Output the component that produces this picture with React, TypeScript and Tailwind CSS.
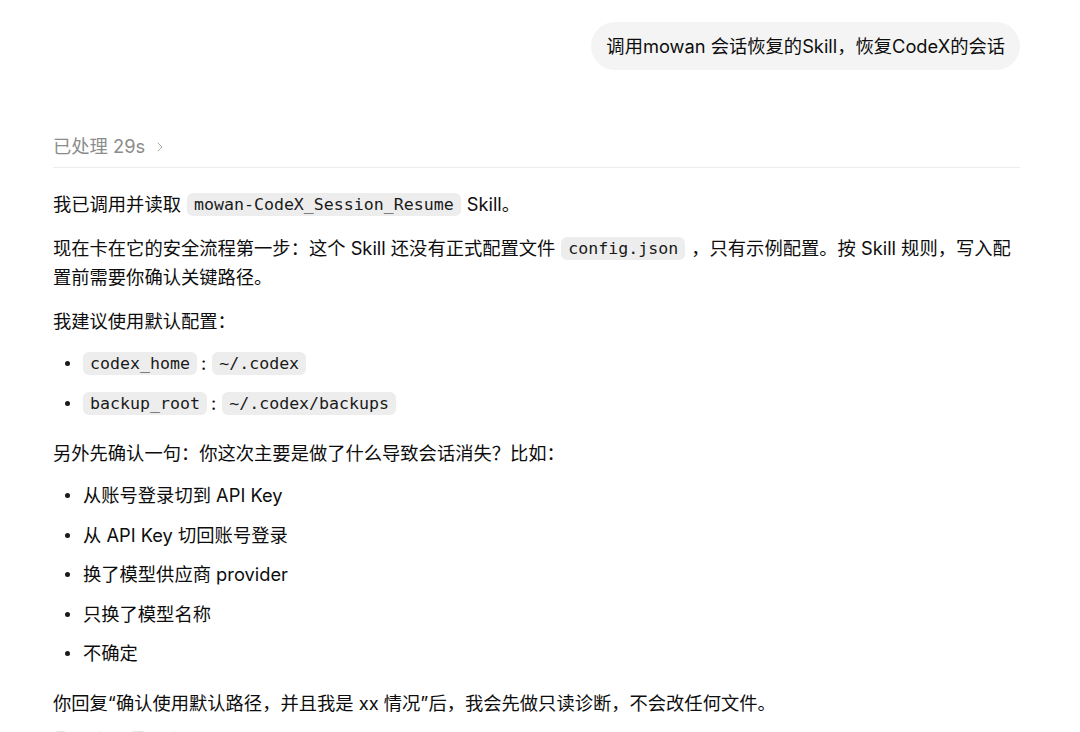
import React from "react";
import { ChevronRight, Copy, ThumbsUp, ThumbsDown, Share, RefreshCw, MoreHorizontal } from "lucide-react";

const Code = ({ children, first }: { children: React.ReactNode; first?: boolean }) => (
  <code
    className={
      (first ? "mr-[4px] ml-0 " : "mx-[6px] ") +
      "inline-block rounded-[6px] bg-[#ededed] px-[7px] py-0 align-[1px] font-['DejaVu_Sans_Mono',monospace] text-[16.6px] leading-[23px] text-[#1a1a1a]"
    }
  >
    {children}
  </code>
);

const Bullet = ({ children }: { children: React.ReactNode }) => (
  <li className="flex items-center">
    <span className="flex w-[30px] justify-center">
      <span className="ml-[-2px] h-[5px] w-[5px] rounded-full bg-[#1a1a1a]" />
    </span>
    <span>{children}</span>
  </li>
);

export default function App() {
  return (
    <div className="h-[732px] w-full overflow-hidden bg-white pl-[53px] pr-[60px] font-['Inter','Noto_Sans_CJK_SC',sans-serif] text-[18.3px] leading-[29px] text-[#0d0d0d]">
      <div className="flex justify-end pt-[22px]">
        <div className="flex h-[48px] items-center rounded-[24px] bg-[#f4f4f4] px-[15px]">
          调用mowan 会话恢复的Skill，恢复CodeX的会话
        </div>
      </div>

      <div className="mt-[62px] flex items-center border-b border-[#ededed] pb-[6px] text-[#8c8c8c]">
        <span>已处理 29s</span>
        <ChevronRight className="ml-[7px] h-[16px] w-[16px] text-[#a8a8a8]" strokeWidth={1.5} />
      </div>

      <p className="mt-[22px]">
        我已调用并读取<Code>mowan-CodeX_Session_Resume</Code>Skill。
      </p>
      <p className="mt-[15px]">
        现在卡在它的安全流程第一步：这个 Skill 还没有正式配置文件<Code>config.json</Code>，只有示例配置。按 Skill 规则，写入配置前需要你确认关键路径。
      </p>
      <p className="mt-[15px]">我建议使用默认配置：</p>
      <ul className="mt-[13px] flex flex-col gap-[11px]">
        <Bullet>
          <Code first>codex_home</Code>:<Code>~/.codex</Code>
        </Bullet>
        <Bullet>
          <Code first>backup_root</Code>:<Code>~/.codex/backups</Code>
        </Bullet>
      </ul>
      <p className="mt-[21px]">另外先确认一句：你这次主要是做了什么导致会话消失？比如：</p>
      <ul className="mt-[13px] flex flex-col gap-[10.5px]">
        <Bullet>从账号登录切到 API Key</Bullet>
        <Bullet>从 API Key 切回账号登录</Bullet>
        <Bullet>换了模型供应商 provider</Bullet>
        <Bullet>只换了模型名称</Bullet>
        <Bullet>不确定</Bullet>
      </ul>
      <p className="mt-[21px]">你回复“确认使用默认路径，并且我是 xx 情况”后，我会先做只读诊断，不会改任何文件。</p>

      <div className="mt-[13px] flex items-center gap-[19px] pl-[1px] text-[#a0a0a0]">
        <Copy className="h-[18px] w-[18px]" strokeWidth={1.8} />
        <ThumbsUp className="h-[18px] w-[18px]" strokeWidth={1.8} />
        <ThumbsDown className="h-[18px] w-[18px]" strokeWidth={1.8} />
        <Share className="h-[18px] w-[18px]" strokeWidth={1.8} />
        <RefreshCw className="h-[18px] w-[18px]" strokeWidth={1.8} />
        <MoreHorizontal className="h-[18px] w-[18px]" strokeWidth={1.8} />
      </div>
    </div>
  );
}
